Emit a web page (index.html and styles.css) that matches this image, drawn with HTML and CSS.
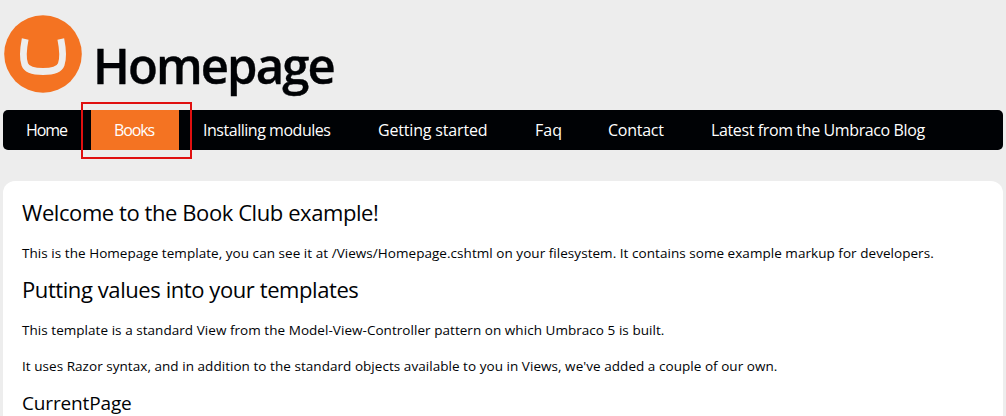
FILE: index.html
```html
<!DOCTYPE html>
<html lang="en">
<head>
<meta charset="utf-8">
<title>Homepage</title>
<link rel="stylesheet" href="styles.css">
</head>
<body>
<header class="header">
  <svg class="logo" viewBox="0 0 78 78" aria-label="Umbraco">
    <circle class="logo-disc" cx="39" cy="39" r="38.8"/>
    <path class="logo-mark" d="M21.200 24C19.400 33 18.800 44 20.800 49.500C22.800 55 29 56.500 39 56.500S55.200 55 57.200 49.500C59.200 44 58.600 33 56.800 24"/>
  </svg>
  <h1 class="title">Homepage</h1>
</header>
<nav class="nav">
  <a class="item home">Home</a>
  <a class="item books">Books</a>
  <a class="item modules">Installing modules</a>
  <a class="item started">Getting started</a>
  <a class="item faq">Faq</a>
  <a class="item contact">Contact</a>
  <a class="item blog">Latest from the Umbraco Blog</a>
</nav>
<main class="content">
  <h2 class="heading welcome">Welcome to the Book Club example!</h2>
  <p class="text intro">This is the Homepage template, you can see it at /Views/Homepage.cshtml on your filesystem. It contains some example markup for developers.</p>
  <h2 class="heading values">Putting values into your templates</h2>
  <p class="text view">This template is a standard View from the Model-View-Controller pattern on which Umbraco 5 is built.</p>
  <p class="text razor">It uses Razor syntax, and in addition to the standard objects available to you in Views, we've added a couple of our own.</p>
  <h3 class="subheading">CurrentPage</h3>
</main>
</body>
</html>
```
FILE: styles.css
```css
*, *::after { box-sizing: border-box; }
html, body { height: 100%; }
body {
  margin: 0;
  padding: 0 3px;
  overflow: hidden;
  display: flex;
  flex-direction: column;
  background: #ededed;
  color: #000205;
  font-family: "Trebuchet MS", "Open Sans", sans-serif;
}
h1, h2, h3, p { margin: 0; font-weight: 400; white-space: nowrap; }
.header { flex: none; display: flex; height: 110px; padding: 15px 0 0 1px; }
.logo { flex: none; width: 78px; height: 78px; }
.logo-disc { fill: #f47322; }
.logo-mark { fill: none; stroke: #ededed; stroke-width: 6.800; }
.title { margin: 16px 0 0 11px; font-size: 49px; line-height: 68px; font-weight: 600; letter-spacing: -1.900px; -webkit-text-stroke: .4px #000205; }
.nav { flex: none; display: flex; width: 1000px; height: 40px; background: #000205; border-radius: 5px; color: #fff; font-size: 16px; line-height: 40px; white-space: nowrap; }
.item { padding-left: 23px; }
.home { width: 88px; letter-spacing: -1.100px; }
.books { width: 88px; position: relative; background: #f47322; letter-spacing: -1.100px; }
/* Highlight frame around the selected tab */
.books::after { content: ""; position: absolute; z-index: 1; left: -10px; top: -8px; width: 111px; height: 57px; border: 2px solid #e01010; }
.modules { width: 176px; padding-left: 24px; letter-spacing: -.470px; }
.started { width: 157px; letter-spacing: -.170px; }
.faq { width: 73px; }
.contact { width: 103px; letter-spacing: -.250px; }
.blog { letter-spacing: -.380px; }
.content { flex: 1; width: 1000px; margin-top: 31px; padding: 16px 19px 0; background: #fff; border-radius: 12px 12px 0 0; }
.heading { font-size: 22px; line-height: 30px; letter-spacing: -.420px; }
.text { font-size: 13.500px; line-height: 20px; letter-spacing: .045px; }
.subheading { margin-top: 14px; font-size: 19px; line-height: 26px; letter-spacing: -.150px; }
.intro { margin-top: 16px; }
.values { margin-top: 11px; }
.view { margin-top: 16px; }
.razor { margin-top: 16px; }
```
